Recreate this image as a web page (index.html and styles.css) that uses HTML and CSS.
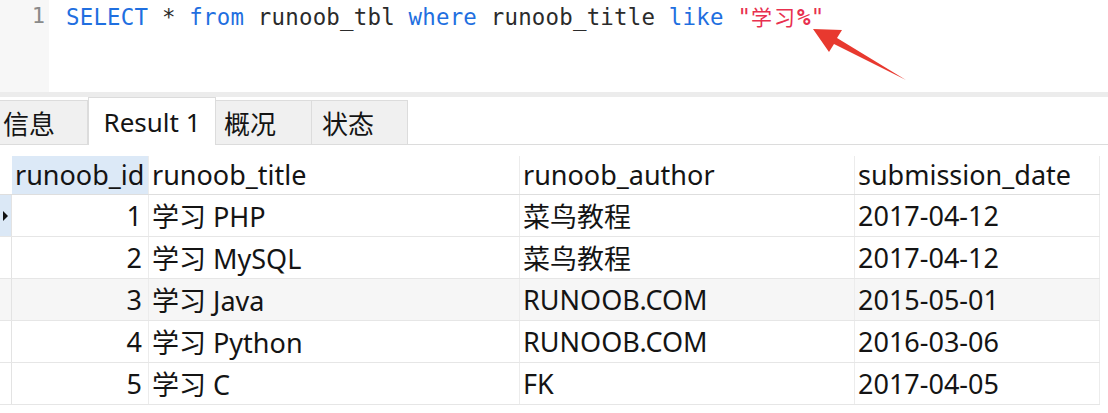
FILE: index.html
```html
<!DOCTYPE html>
<html lang="zh">
<head>
<meta charset="utf-8">
<title>Query</title>
<link rel="stylesheet" href="styles.css">
</head>
<body>
<div class="page">
  <div class="editor">
    <div class="gutter"><span class="lineno">1</span></div>
    <div class="code"><span class="kw">SELECT</span> * <span class="kw">from</span> runoob_tbl <span class="kw">where</span> runoob_title <span class="kw">like</span> <span class="str">"<span class="cjk">学习</span><span class="pct">%</span>"</span></div>
    <svg class="arrow" width="1108" height="100" viewBox="0 0 1108 100">
      <polygon points="813,29 829,52 834,44 906,80 837,38 842,30" fill="#e8392f"/>
    </svg>
  </div>
  <div class="band"></div>
  <div class="tabs">
    <div class="tab t1">信息</div>
    <div class="tab active">Result 1</div>
    <div class="tab t3">概况</div>
    <div class="tab t4">状态</div>
    <div class="tabfill"></div>
  </div>
  <div class="grid">
    <div class="row head">
      <div class="ind"></div>
      <div class="c id sel">runoob_id</div>
      <div class="c title">runoob_title</div>
      <div class="c author">runoob_author</div>
      <div class="c date">submission_date</div>
    </div>
    <div class="row">
      <div class="ind cur"><span class="tri"></span></div>
      <div class="c id num">1</div>
      <div class="c title">学习 PHP</div>
      <div class="c author">菜鸟教程</div>
      <div class="c date">2017-04-12</div>
    </div>
    <div class="row">
      <div class="ind"></div>
      <div class="c id num">2</div>
      <div class="c title">学习 MySQL</div>
      <div class="c author">菜鸟教程</div>
      <div class="c date">2017-04-12</div>
    </div>
    <div class="row alt">
      <div class="ind"></div>
      <div class="c id num">3</div>
      <div class="c title">学习 Java</div>
      <div class="c author">RUNOOB.COM</div>
      <div class="c date">2015-05-01</div>
    </div>
    <div class="row">
      <div class="ind"></div>
      <div class="c id num">4</div>
      <div class="c title">学习 Python</div>
      <div class="c author">RUNOOB.COM</div>
      <div class="c date">2016-03-06</div>
    </div>
    <div class="row">
      <div class="ind"></div>
      <div class="c id num">5</div>
      <div class="c title">学习 C</div>
      <div class="c author">FK</div>
      <div class="c date">2017-04-05</div>
    </div>
  </div>
</div>
</body>
</html>
```
FILE: styles.css
```css
html, body {
  margin: 0;
  padding: 0;
  background: #ffffff;
}
.page {
  width: 1108px;
  height: 413px;
  overflow: hidden;
  font-family: "Noto Sans", "Noto Sans CJK SC", sans-serif;
  color: #141414;
}
.editor {
  position: relative;
  height: 92px;
  display: flex;
  background: #ffffff;
}
.gutter {
  width: 49px;
  background: #f7f7f7;
  display: flex;
  justify-content: flex-end;
}
.lineno {
  font-family: "DejaVu Sans Mono", monospace;
  font-size: 22px;
  line-height: 32px;
  color: #8a8a8a;
  padding-right: 4px;
}
.code {
  padding-left: 17px;
  font-family: "DejaVu Sans Mono", "Noto Sans CJK SC", monospace;
  font-size: 22.4px;
  letter-spacing: 0.22px;
  line-height: 32px;
  color: #2b2b2b;
  white-space: pre;
}
.kw { color: #1f6fe0; }
.str { color: #e8304f; }
.cjk { font-family: "Noto Sans CJK SC", sans-serif; font-size: 21px; letter-spacing: 2px; }
.pct { font-family: "DejaVu Sans Mono", monospace; font-weight: bold; }
.arrow {
  position: absolute;
  left: 0;
  top: 0;
}
.band {
  height: 5px;
  background: #ececec;
}
.tabs {
  display: flex;
  height: 48px;
  align-items: flex-end;
  background: #ffffff;
}
.tab {
  box-sizing: border-box;
  height: 45px;
  display: flex;
  align-items: center;
  justify-content: center;
  font-size: 26px;
  background: #f0f0f0;
  border: 1px solid #dcdcdc;
  border-left: none;
  color: #141414;
}
.t1 { width: 88px; justify-content: flex-start; padding-left: 3px; }
.active {
  width: 128px;
  height: 48px;
  background: #ffffff;
  border-left: 1px solid #dcdcdc;
  border-bottom: none;
}
.t3 { width: 96px; justify-content: flex-start; padding-left: 8px; }
.t4 { width: 96px; justify-content: flex-start; padding-left: 10px; }
.tabfill {
  flex: 1;
  height: 1px;
  background: #dcdcdc;
}
.grid {
  margin-top: 11px;
  width: 1100px;
}
.row {
  display: grid;
  grid-template-columns: 12px 137px 371px 335px 245px;
  height: 42px;
  box-sizing: border-box;
  border-bottom: 1px solid #e6e6e6;
}
.row.head { height: 39px; border-bottom: 1px solid #dedede; }
.row.alt { background: #f6f6f6; }
.ind {
  border-right: 1px solid #e3e3e3;
  display: flex;
  align-items: center;
  justify-content: center;
}
.ind.cur { background: #dbe8f6; }
.tri {
  width: 0;
  height: 0;
  border-top: 5px solid transparent;
  border-bottom: 5px solid transparent;
  border-left: 5px solid #111;
}
.c {
  font-size: 27px;
  display: flex;
  align-items: center;
  padding-left: 3px;
  padding-bottom: 1px;
  box-sizing: border-box;
  border-right: 1px solid #ececec;
  white-space: nowrap;
  overflow: hidden;
}
.c.sel { background: #dce9f7; }
.c.num { justify-content: flex-end; padding-right: 6px; padding-left: 0; }
.row.head .ind { border-right: none; }
```
